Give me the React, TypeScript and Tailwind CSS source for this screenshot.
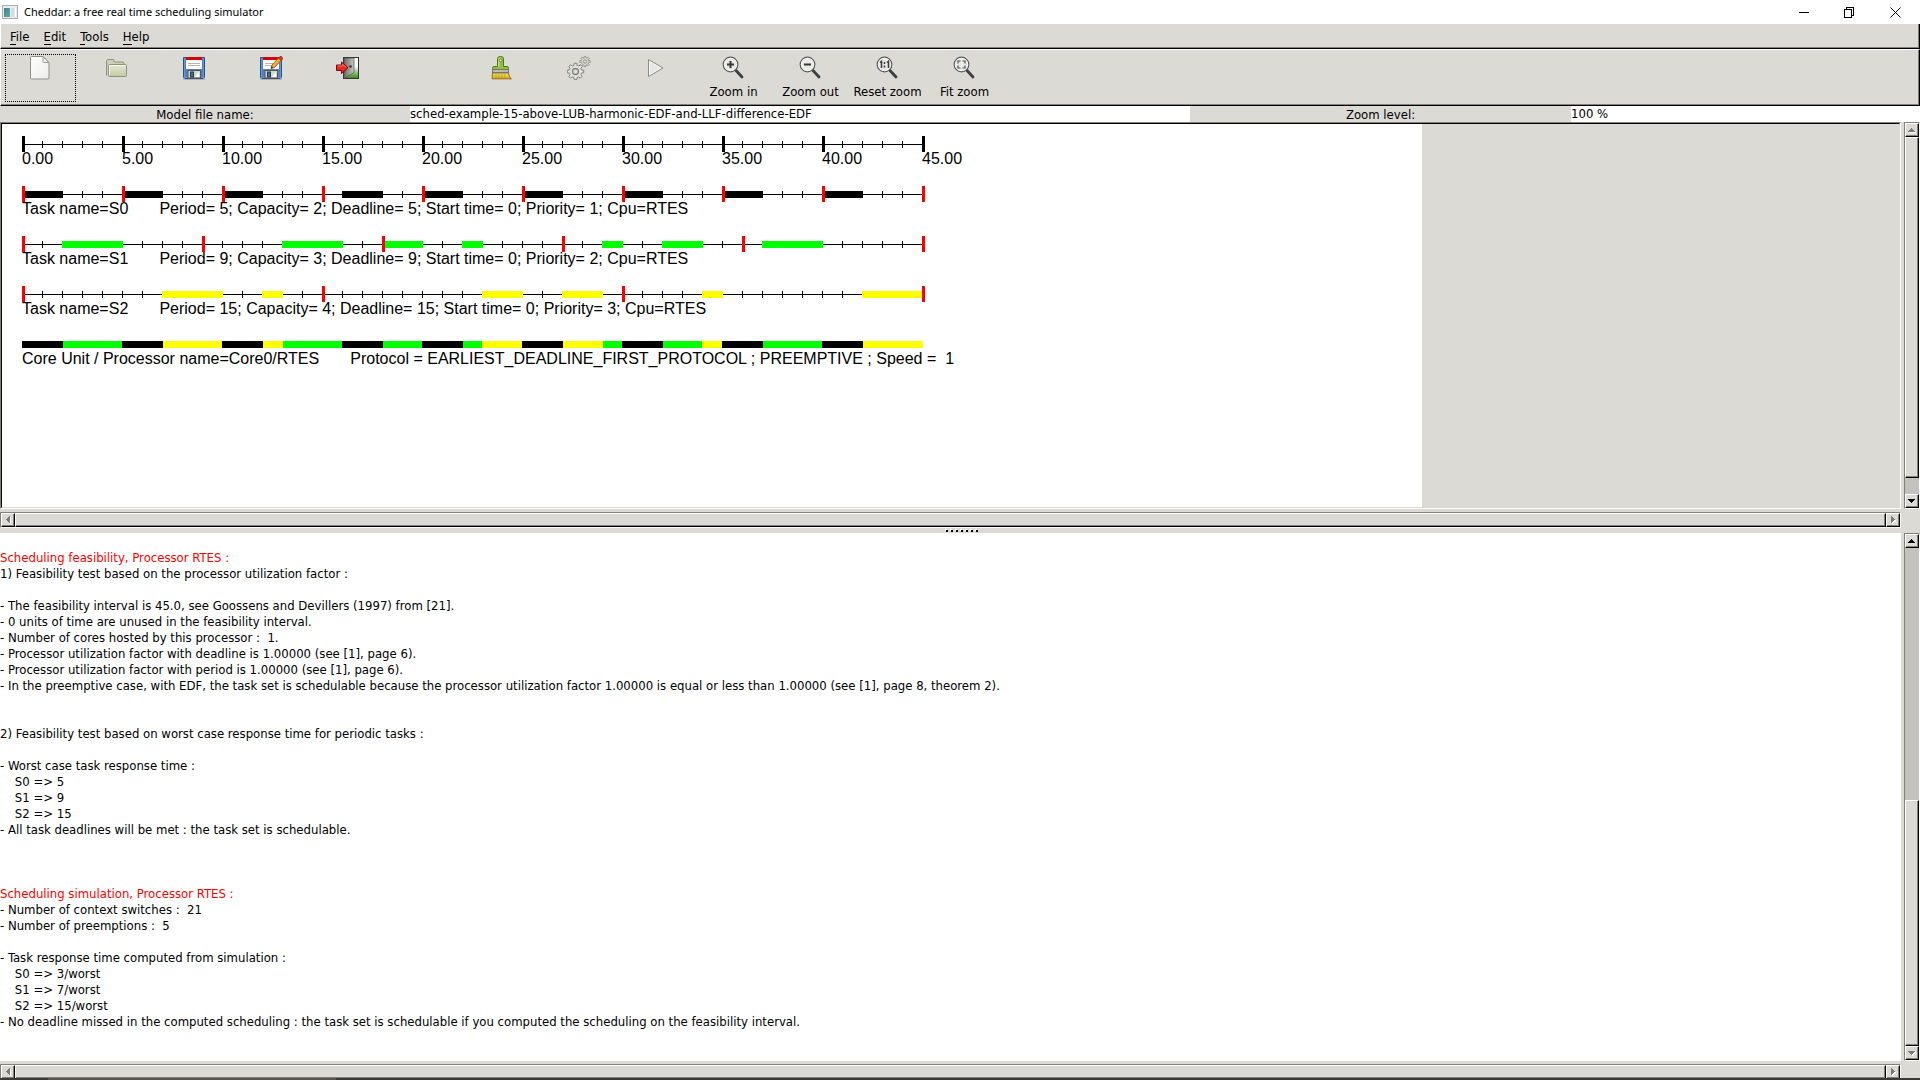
import type { ReactNode } from 'react'

type Span = [number, number]
type Direction = 'up' | 'down' | 'left' | 'right'

const UNIT = 20
const END = 45

const S0: Span[] = [[0, 2], [5, 7], [10, 12], [16, 18], [20, 22], [25, 27], [30, 32], [35, 37], [40, 42]]
const S1: Span[] = [[2, 5], [13, 16], [18, 20], [22, 23], [29, 30], [32, 34], [37, 40]]
const S2: Span[] = [[7, 10], [12, 13], [23, 25], [27, 29], [34, 35], [42, 45]]

const TASKS = [
  { color: '#000000', spans: S0, period: 5, text: 'Task name=S0       Period= 5; Capacity= 2; Deadline= 5; Start time= 0; Priority= 1; Cpu=RTES' },
  { color: '#00ff00', spans: S1, period: 9, text: 'Task name=S1       Period= 9; Capacity= 3; Deadline= 9; Start time= 0; Priority= 2; Cpu=RTES' },
  { color: '#ffff00', spans: S2, period: 15, text: 'Task name=S2       Period= 15; Capacity= 4; Deadline= 15; Start time= 0; Priority= 3; Cpu=RTES' },
]

const LOG = [
  '',
  '!Scheduling feasibility, Processor RTES :',
  '1) Feasibility test based on the processor utilization factor :',
  '',
  '- The feasibility interval is 45.0, see Goossens and Devillers (1997) from [21].',
  '- 0 units of time are unused in the feasibility interval.',
  '- Number of cores hosted by this processor :  1.',
  '- Processor utilization factor with deadline is 1.00000 (see [1], page 6).',
  '- Processor utilization factor with period is 1.00000 (see [1], page 6).',
  '- In the preemptive case, with EDF, the task set is schedulable because the processor utilization factor 1.00000 is equal or less than 1.00000 (see [1], page 8, theorem 2).',
  '',
  '',
  '2) Feasibility test based on worst case response time for periodic tasks :',
  '',
  '- Worst case task response time :',
  '    S0 => 5',
  '    S1 => 9',
  '    S2 => 15',
  '- All task deadlines will be met : the task set is schedulable.',
  '',
  '',
  '',
  '!Scheduling simulation, Processor RTES :',
  '- Number of context switches :  21',
  '- Number of preemptions :  5',
  '',
  '- Task response time computed from simulation :',
  '    S0 => 3/worst',
  '    S1 => 7/worst',
  '    S2 => 15/worst',
  '- No deadline missed in the computed scheduling : the task set is schedulable if you computed the scheduling on the feasibility interval.',
]

function Axis({ major, majorColor, children }: { major: number; majorColor: string; children?: ReactNode }) {
  const units = Array.from({ length: END + 1 }, (_, i) => i)
  return (
    <svg width={904} height={16} viewBox="0 0 904 16" shapeRendering="crispEdges" className="block" aria-hidden="true">
      <rect x={0} y={8} width={END * UNIT} height={1} fill="#000" />
      {units.map((u) => u % major !== 0 && <rect key={u} x={u * UNIT} y={5} width={1} height={7} fill="#000" />)}
      {children}
      {units.map((u) => u % major === 0 && <rect key={u} x={u * UNIT} y={0} width={3} height={16} fill={majorColor} />)}
    </svg>
  )
}

function Blocks({ spans, color }: { spans: Span[]; color: string }) {
  return (
    <>
      {spans.map(([a, b]) => (
        <rect key={a} x={a * UNIT} y={5} width={(b - a) * UNIT + 1} height={7} fill={color} />
      ))}
    </>
  )
}

function Chart() {
  const labels = Array.from({ length: END / 5 + 1 }, (_, i) => (i * 5).toFixed(2))
  return (
    <div className="h-full max-w-[1420px] space-y-5 bg-white pl-5 pt-3 font-['Liberation_Sans',sans-serif] text-base/[14px] text-black">
      <div>
        <Axis major={5} majorColor="#000" />
        <div className="flex">
          {labels.map((l) => (
            <span key={l} className="w-[100px] shrink-0">{l}</span>
          ))}
        </div>
      </div>
      {TASKS.map((t) => (
        <div key={t.text}>
          <Axis major={t.period} majorColor="#ff0000">
            <Blocks spans={t.spans} color={t.color} />
          </Axis>
          <p className="whitespace-pre">{t.text}</p>
        </div>
      ))}
      <div>
        <svg width={904} height={16} viewBox="0 0 904 16" shapeRendering="crispEdges" className="block" aria-hidden="true">
          <Blocks spans={S1} color="#00ff00" />
          <Blocks spans={S2} color="#ffff00" />
          <Blocks spans={S0} color="#000000" />
        </svg>
        <p className="whitespace-pre">{'Core Unit / Processor name=Core0/RTES       Protocol = EARLIEST_DEADLINE_FIRST_PROTOCOL ; PREEMPTIVE ; Speed =  1'}</p>
      </div>
    </div>
  )
}

const ARROWS: Record<Direction, string> = {
  up: 'M3 0h1v1h1v1h1v1h1v1H0V3h1V2h1V1h1z',
  down: 'M0 0h7v1H6v1H5v1H4v1H3V3H2V2H1V1H0z',
  left: 'M4 0v7H3V6H2V5H1V4H0V3h1V2h1V1h1V0z',
  right: 'M0 0h1v1h1v1h1v1h1v1H3v1H2v1H1v1H0z',
}

function ArrowButton({ dir, active, label }: { dir: Direction; active?: boolean; label: string }) {
  return (
    <button
      type="button"
      aria-label={label}
      className="flex size-[14px] shrink-0 items-center justify-center border border-b-black border-l-white border-r-black border-t-white bg-[#dcdad5] shadow-[inset_-1px_-1px_0_#848278]"
    >
      <svg width={8} height={8} viewBox="0 0 8 8" shapeRendering="crispEdges" className="shrink-0">
        <g transform={dir === 'up' || dir === 'down' ? 'translate(0 2)' : 'translate(2 0)'}>
          {!active && <path d={ARROWS[dir]} fill="#fff" transform="translate(1 1)" />}
          <path d={ARROWS[dir]} fill={active ? '#000' : '#7c7a72'} />
        </g>
      </svg>
    </button>
  )
}

const THUMB = 'border border-b-black border-l-white border-r-black border-t-white bg-[#dcdad5] shadow-[inset_-1px_-1px_0_#848278]'
const TROUGH = 'flex shrink-0 border border-b-white border-l-[#848278] border-r-white border-t-[#848278] bg-[#c4c2bd]'

function HorizontalScrollbar() {
  return (
    <div className={'h-4 ' + TROUGH}>
      <ArrowButton dir="left" label="Scroll left" />
      <div className={'flex-1 ' + THUMB} />
      <ArrowButton dir="right" label="Scroll right" />
    </div>
  )
}

type ToolProps = { label: string; caption?: string; focused?: boolean; children: ReactNode }

function Tool({ label, caption, focused, children }: ToolProps) {
  return (
    <button
      type="button"
      aria-label={label}
      className={
        'mx-[3px] flex h-12 w-[71px] shrink-0 flex-col items-center whitespace-nowrap border border-dotted ' +
        (focused ? 'border-black' : 'border-transparent')
      }
    >
      <svg width={25} height={24} viewBox="0 0 25 24" className="mt-px shrink-0" aria-hidden="true">
        {children}
      </svg>
      {caption && <span className="mt-1 leading-4">{caption}</span>}
    </button>
  )
}

function Floppy() {
  return (
    <>
      <rect x={1} y={21} width={22} height={3} rx={1} fill="#000" opacity={0.18} />
      <path d="M1.5 1.5h21v19.500l-1.500 1.500H3L1.500 21z" fill="#4f82c4" stroke="#244f8c" />
      <rect x={2.5} y={2.5} width={19} height={19} fill="none" stroke="#7ba5db" strokeWidth={1} opacity={0.6} />
      <rect x={4} y={2} width={16} height={11} fill="#fff" />
      <rect x={4} y={1} width={16} height={3} fill="#d40000" />
      <path d="M6 7.500h12M6 9.500h12" stroke="#b5b5b5" />
      <path d="M6 14.500h12.500v7.500H6z" fill="#d3d7cf" stroke="#555753" />
      <rect x={8.5} y={16} width={3} height={5} fill="#456fa8" stroke="#333" />
      <path d="M13 21l4-5v5z" fill="#fff" />
    </>
  )
}

function Magnifier({ children }: { children: ReactNode }) {
  return (
    <>
      <path d="M15 14.500l6 6.500" stroke="#3c3f40" strokeWidth={2.8} strokeLinecap="round" />
      <circle cx={9.5} cy={8.5} r={7.3} fill="#e9e9e6" stroke="#565a5b" strokeWidth={1.2} />
      <circle cx={9.5} cy={8.5} r={6.2} fill="none" stroke="#fff" strokeWidth={0.8} opacity={0.8} />
      {children}
    </>
  )
}

function gearPath(cx: number, cy: number, outer: number, inner: number, teeth: number) {
  const pts: string[] = []
  for (let i = 0; i < teeth; i++) {
    const base = (i / teeth) * Math.PI * 2
    const step = (Math.PI * 2) / teeth
    const corners: Span[] = [[-0.3, inner], [-0.2, outer], [0.2, outer], [0.3, inner]]
    corners.forEach(([k, r]) => {
      const a = base + k * step
      pts.push((cx + r * Math.cos(a)).toFixed(2) + ',' + (cy + r * Math.sin(a)).toFixed(2))
    })
  }
  return pts.join(' ')
}

function Menu({ name }: { name: string }) {
  return (
    <button type="button" className="leading-4">
      <span className="border-b border-black">{name[0]}</span>
      {name.slice(1)}
    </button>
  )
}

export default function App() {
  return (
    <div className="flex h-screen flex-col overflow-hidden bg-[#dcdad5] font-['DejaVu_Sans_Condensed','DejaVu_Sans',sans-serif] text-[13px] text-black">
      <header className="flex h-6 shrink-0 items-center bg-white pl-0.5 font-['Noto_Sans',sans-serif] text-[11px]">
        <svg width={16} height={14} viewBox="0 0 16 14" aria-hidden="true">
          <defs>
            <linearGradient id="app" x1="0" y1="0" x2="1" y2="1">
              <stop offset="0" stopColor="#3d7fa3" />
              <stop offset="1" stopColor="#5fb08a" />
            </linearGradient>
          </defs>
          <rect x={0.5} y={0.5} width={15} height={13} fill="#e9edf0" stroke="#a9adb2" />
          <rect x={2} y={3} width={6} height={9} fill="url(#app)" />
          <rect x={9} y={3} width={3} height={9} fill="#cfdde2" />
          <rect x={13} y={3} width={1} height={9} fill="#fff" />
        </svg>
        <h1 className="ml-1.5 flex-1 whitespace-nowrap">Cheddar: a free real time scheduling simulator</h1>
        <div className="flex h-5 pr-0.5">
          <button type="button" aria-label="Minimize" className="flex w-[46px] items-center justify-center">
            <svg width={11} height={11} shapeRendering="crispEdges"><path d="M1 5h10v1H1z" /></svg>
          </button>
          <button type="button" aria-label="Restore" className="flex w-[46px] items-center justify-center">
            <svg width={11} height={11} shapeRendering="crispEdges" fill="none" stroke="#000">
              <path d="M.5 2.500h7v8h-7zM2.500 2.500v-2h7v8h-2" />
            </svg>
          </button>
          <button type="button" aria-label="Close" className="flex w-[46px] items-center justify-center">
            <svg width={11} height={11} stroke="#000"><path d="M.5 .5l10 10M10.500 .5l-10 10" /></svg>
          </button>
        </div>
      </header>

      <nav className="flex h-[25px] shrink-0 items-center gap-3.5 border-b border-l border-r border-b-black border-l-white border-r-black pl-[9px] pt-0.5 shadow-[inset_-1px_-1px_0_#848278]">
        <Menu name="File" />
        <Menu name="Edit" />
        <Menu name="Tools" />
        <Menu name="Help" />
      </nav>

      <div role="toolbar" className="flex h-[57px] shrink-0 border border-b-black border-l-white border-r-black border-t-white pl-px pt-1 shadow-[inset_-1px_-1px_0_#848278]">
        <Tool label="New" focused>
          <defs>
            <linearGradient id="page" x1="0" y1="0" x2="1" y2="1">
              <stop offset="0" stopColor="#ffffff" />
              <stop offset="1" stopColor="#ececec" />
            </linearGradient>
          </defs>
          <path d="M3.500 .5h11.500l6 6v15.500q0 1-1 1H3.500q-1 0-1-1V1.500q0-1 1-1z" fill="url(#page)" stroke="#8f9189" />
          <path d="M15 .8v4.700q0 1 1 1h4.800z" fill="#f6f6f4" stroke="#9a9c94" />
        </Tool>
        <Tool label="Open">
          <defs>
            <linearGradient id="folder" x1="0" y1="0" x2="0" y2="1">
              <stop offset="0" stopColor="#e4e8d4" />
              <stop offset="1" stopColor="#c3caa4" />
            </linearGradient>
          </defs>
          <path d="M1.500 19.500V4.500l1-1h6l1 2.500h8.500l1 1v4" fill="#ccd0b6" stroke="#8d9278" />
          <path d="M4.500 20.500q-1 0-1-1V9.500q0-1 1-1h16q1 0 1 1v10q0 1-1 1z" fill="url(#folder)" stroke="#8d9278" />
          <path d="M4.500 19V9.500h16" fill="none" stroke="#f5f7ea" />
        </Tool>
        <Tool label="Save"><Floppy /></Tool>
        <Tool label="Save as">
          <Floppy />
          <path d="M12 12.500l1-3.500 7.500-8 2.500 2.500-7.500 8z" fill="#f3a83c" stroke="#a55b0c" strokeWidth={0.9} />
          <path d="M12 12.500l.6-2.200 1.600 1.500z" fill="#222" />
          <path d="M19.500 2l1.500-1.500q1-.5 2 .5t.3 2L22 4.500z" fill="#d33b2f" stroke="#8c1a10" strokeWidth={0.7} />
        </Tool>
        <Tool label="Exit">
          <defs>
            <linearGradient id="grass" x1="0" y1="0" x2="0" y2="1">
              <stop offset="0.400" stopColor="#ffffff" />
              <stop offset="1" stopColor="#3a8510" />
            </linearGradient>
            <linearGradient id="door" x1="0" y1="0" x2="1" y2="0">
              <stop offset="0" stopColor="#6a6c64" />
              <stop offset="1" stopColor="#c6c8c0" />
            </linearGradient>
          </defs>
          <rect x={7.5} y={1.5} width={15} height={21} fill="url(#grass)" stroke="#2e3436" />
          <path d="M8 2h10v14.500l-10 6z" fill="url(#door)" stroke="#4c4f4c" strokeWidth={0.7} />
          <circle cx={14.5} cy={10.500} r={1.3} fill="#2e3436" />
          <path d="M.5 9h5V6l6.500 5.800L5.500 17.500v-3h-5z" fill="#e02b2b" stroke="#8a0000" />
          <path d="M1.500 10h5V8.300l3.500 3" fill="none" stroke="#f58a8a" strokeWidth={0.8} />
        </Tool>
        <div className="w-[77px] shrink-0" />
        <Tool label="Clean">
          <defs>
            <linearGradient id="bristle" x1="0" y1="0" x2="0" y2="1">
              <stop offset="0" stopColor="#f7eb7a" />
              <stop offset="1" stopColor="#cfa818" />
            </linearGradient>
          </defs>
          <path d="M2.500 17h16l1 4 2 1.800H2z" fill="url(#bristle)" stroke="#94700a" />
          <path d="M6 18v4M9 18v4M12 18v4M15 18v4" stroke="#b48c10" strokeWidth={0.7} />
          <path d="M7.500 10.500V2.500q0-2 3-2t3 2v8H17q1.500 0 1.500 2v1H2.500v-1q0-2 1.500-2z" fill="#8fc043" stroke="#4a7a10" />
          <path d="M8.800 11V3q0-1 1.700-1" fill="none" stroke="#d4ee9e" />
          <circle cx={10.5} cy={4.500} r={1.4} fill="#e8efdc" stroke="#4a7a10" strokeWidth={0.8} />
          <rect x={2.5} y={13.500} width={16} height={3} fill="#b9bcb5" stroke="#74776f" />
        </Tool>
        <Tool label="Run analysis">
          <polygon points={gearPath(8.5, 15.500, 8.3, 6.300, 8)} fill="#e2e2df" stroke="#80827d" strokeLinejoin="round" />
          <circle cx={8.5} cy={15.500} r={3} fill="#dcdad5" stroke="#80827d" strokeWidth={1.3} />
          <polygon points={gearPath(18, 5.500, 5.300, 3.800, 8)} fill="#d6d6d2" stroke="#8e908b" strokeWidth={0.9} strokeLinejoin="round" />
          <circle cx={18} cy={5.500} r={1.700} fill="#dcdad5" stroke="#8e908b" strokeWidth={0.9} />
        </Tool>
        <Tool label="Simulate">
          <path d="M4.500 3.500v17L19 12z" fill="#e6e6e3" stroke="#8a8c86" strokeLinejoin="round" />
          <path d="M5.500 5.500v13.200L16.500 12z" fill="none" stroke="#fafaf9" strokeWidth={0.8} />
        </Tool>
        <Tool label="Zoom in" caption="Zoom in">
          <Magnifier><path d="M6 8.500h7M9.500 5v7" stroke="#35393a" strokeWidth={2} /></Magnifier>
        </Tool>
        <Tool label="Zoom out" caption="Zoom out">
          <Magnifier><path d="M6 8.500h7" stroke="#35393a" strokeWidth={2} /></Magnifier>
        </Tool>
        <Tool label="Reset zoom" caption="Reset zoom">
          <Magnifier>
            <path d="M5 6.500l1.500-1.200V12M12 6.500l1.500-1.200V12" fill="none" stroke="#35393a" strokeWidth={1.5} />
            <path d="M9.500 6v2M9.500 9.500v2" stroke="#35393a" strokeWidth={1.500} />
          </Magnifier>
        </Tool>
        <Tool label="Fit zoom" caption="Fit zoom">
          <Magnifier>
            <path d="M6 7.500V5H8.500M10.500 5H13V7.500M13 9.500V12h-2.500M8.500 12H6V9.500" fill="none" stroke="#4b4f50" strokeWidth={1.2} />
          </Magnifier>
        </Tool>
      </div>

      <div className="grid h-4 shrink-0 grid-cols-[410fr_780fr_381fr_349fr] leading-[18px]">
        <label htmlFor="model" className="text-center">Model file name:</label>
        <input id="model" readOnly defaultValue="sched-example-15-above-LUB-harmonic-EDF-and-LLF-difference-EDF" className="h-4 min-w-0 bg-white p-0 outline-none" />
        <label htmlFor="zoom" className="text-center">Zoom level:</label>
        <input id="zoom" readOnly defaultValue="100 %" className="h-4 min-w-0 bg-white p-0 outline-none" />
      </div>

      <section className="flex min-h-0 flex-[406]">
        <div className="flex min-w-0 flex-1 flex-col gap-[3px]">
          <div className="min-h-0 flex-1 border border-b-white border-l-[#848278] border-r-white border-t-[#848278]">
            <div className="h-full overflow-hidden border border-b-[#dcdad5] border-l-black border-r-[#dcdad5] border-t-black">
              <Chart />
            </div>
          </div>
          <HorizontalScrollbar />
        </div>
        <div className={'mb-[19px] ml-[3px] w-4 flex-col ' + TROUGH}>
          <ArrowButton dir="up" label="Scroll chart up" />
          <div className={'flex-[341] ' + THUMB} />
          <div className="flex-[16]" />
          <ArrowButton dir="down" active label="Scroll chart down" />
        </div>
      </section>

      <div role="separator" className="flex h-[5px] shrink-0 justify-center gap-[3px] pl-[3px] pt-0.5">
        {Array.from({ length: 7 }, (_, i) => (
          <span key={i} className="size-[2px] bg-black shadow-[-1px_-1px_0_#ffffff]" />
        ))}
      </div>

      <section className="flex min-h-0 flex-[545]">
        <div className="flex min-w-0 flex-1 flex-col overflow-hidden">
          <div className="min-h-0 flex-1 overflow-hidden bg-white pt-px leading-4">
            {LOG.map((line, i) => (
              <p key={i} className={line.startsWith('!') ? 'min-h-4 whitespace-pre text-[#ff0000]' : 'min-h-4 whitespace-pre'}>
                {line.replace('!', '')}
              </p>
            ))}
          </div>
          <div className="mt-[3px] h-[14px] shrink-0 overflow-hidden">
            <HorizontalScrollbar />
          </div>
        </div>
        <div className={'mb-[17px] ml-[3px] w-4 flex-col ' + TROUGH}>
          <ArrowButton dir="up" active label="Scroll report up" />
          <div className="flex-[254]" />
          <div className={'flex-[245] ' + THUMB} />
          <ArrowButton dir="down" label="Scroll report down" />
        </div>
      </section>

      <footer className="flex h-0.5 shrink-0 bg-[#3a3a37]">
        <div className="ml-12 w-72 bg-[#55544f]" />
      </footer>
    </div>
  )
}
